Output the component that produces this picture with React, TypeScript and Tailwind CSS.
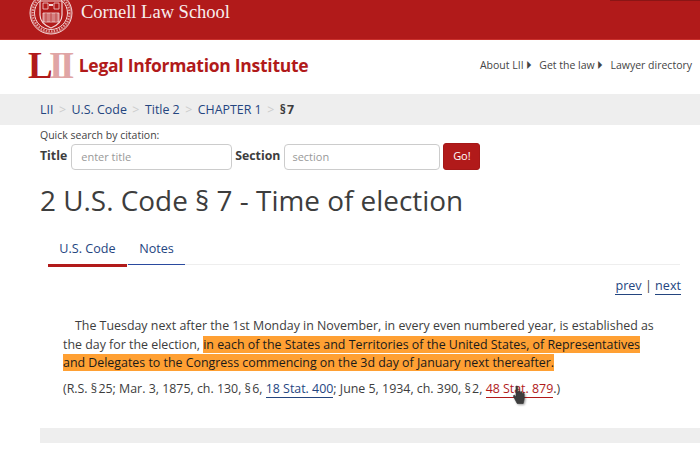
import React from 'react'

const linkBlue = 'text-[#24457f]'

const Seal = () => (
  <svg width="44" height="44" viewBox="0 0 44 44" fill="none" stroke="#f3d6d6">
    <circle cx="22" cy="22" r="21" strokeWidth="1" />
    <circle cx="22" cy="22" r="20" strokeWidth="0.5" />
    <circle cx="22" cy="22" r="16.5" strokeWidth="1" />
    <circle cx="22" cy="22" r="18.3" strokeWidth="2.2" strokeDasharray="1.5 1.2" opacity="0.7" />
    <path d="M11 10h22v14c0 7-6 11-11 13-5-2-11-6-11-13z" strokeWidth="1.2" />
    <path d="M14 12h5v6h-5zM25 12h5v6h-5z" strokeWidth="1" opacity="0.8" />
    <path d="M20 14h4" strokeWidth="2" />
    <path d="M14 22h16v9h-16z" fill="#f3d6d6" fillOpacity="0.55" strokeWidth="0.8" />
    <path d="M22 22v9M17 22v9M27 22v9" strokeWidth="0.6" stroke="#b11a1a" />
  </svg>
)

const HandCursor = () => (
  <svg width="16" height="20" viewBox="0 0 16 20" className="drop-shadow-[1px_1px_1px_rgba(0,0,0,0.4)]">
    <path
      d="M4 1.5c0-.8 1.6-.8 1.6 0V8l.6-.2V6.6c0-.8 1.6-.8 1.6 0V8l.6 0V7.2c0-.8 1.6-.8 1.6 0v1.2l.6.1c0-.8 1.6-.7 1.6.2V14l-1 4.5H5.2L1.5 11.5c-.5-1 .7-1.8 1.4-1L4 12z"
      fill="#3d3d3d"
      stroke="#333"
      strokeWidth="0.6"
    />
  </svg>
)

const Sep = () => <span className="mx-[5.5px] text-[#ccc]">&gt;</span>

export default function App() {
  return (
    <div className="relative h-[451px] w-[700px] overflow-hidden bg-white font-['Open_Sans',sans-serif] text-[#3d3d3d]">
      {/* Cornell bar */}
      <header className="flex h-[40px] items-center overflow-hidden border-b border-[#c9302c] bg-[#b11a1a] pl-[29px]">
        <div className="-mt-[14px] h-[44px] w-[44px] shrink-0">
          <Seal />
        </div>
        <span className="ml-[8px] -mt-[13px] font-['Liberation_Serif',serif] text-[18.5px] text-[#f8eeee]">Cornell Law School</span>
      </header>
      <div className="absolute right-0 top-0 h-px w-[90px] bg-[#8a1515]" />

      {/* LII bar */}
      <div className="flex h-[54px] items-center justify-between pl-[29px] pr-[8px]">
        <div className="-mt-[4px] flex items-center">
          <span className="-ml-px font-['Liberation_Serif',serif] text-[37px] font-bold leading-none tracking-[-3.6px] text-[#b11a1a]">
            L<span className="text-[#e0a5a5]">II</span>
          </span>
          <span className="ml-[8px] text-[17.5px] font-bold tracking-[-0.27px] text-[#b11a1a]">Legal Information Institute</span>
        </div>
        <nav className="-mt-[2px] flex items-center gap-[7px] text-[10.5px] text-[#444]">
          <span>About LII ⏵</span>
          <span>Get the law ⏵</span>
          <span>Lawyer directory</span>
        </nav>
      </div>

      {/* Breadcrumb */}
      <div className="flex h-[31px] items-center bg-[#eee] pl-[40px] pt-[2px] text-[12.4px]">
        <span className={linkBlue}>LII</span>
        <Sep />
        <span className={linkBlue}>U.S. Code</span>
        <Sep />
        <span className={linkBlue}>Title 2</span>
        <Sep />
        <span className={linkBlue}>CHAPTER 1</span>
        <Sep />
        <span className="font-bold">§&#8202;7</span>
      </div>

      {/* Quick search */}
      <div className="pl-[40px]">
        <div className="mt-[2px] text-[10.5px] leading-[16px] text-[#444]">Quick search by citation:</div>
        <div className="mt-[1px] flex items-start">
          <label className="mr-[4px] text-[12.3px] font-bold leading-[24px]">Title</label>
          <div className="flex h-[26px] w-[161px] items-center rounded-[4px] border border-[#ccc] pl-[9px] text-[11px] text-[#999]">enter title</div>
          <label className="ml-[3px] mr-[4px] text-[12.3px] font-bold leading-[24px]">Section</label>
          <div className="flex h-[26px] w-[156px] items-center rounded-[4px] border border-[#ccc] pl-[7px] text-[11px] text-[#999]">section</div>
          <button className="-mt-px ml-[3px] h-[27px] w-[37px] rounded-[3px] border border-[#a51818] bg-[#b11a1a] text-[11px] text-white">Go!</button>
        </div>
        <h1 className="mt-[10px] text-[27.9px] leading-[40px]">2 U.S. Code § 7 - Time of election</h1>
      </div>

      {/* Tabs */}
      <div className="ml-[48px] mr-[20px] mt-[14px] flex h-[31px] items-start border-b border-[#eee]">
        <div className={`flex h-[33px] w-[79px] shrink-0 items-center justify-center border-b-[3px] border-[#b11a1a] text-[12.6px] ${linkBlue}`}>U.S. Code</div>
        <div className={`ml-px flex h-[31px] w-[57px] shrink-0 items-center justify-center border-b border-[#2a4a9f] text-[12.6px] ${linkBlue}`}>Notes</div>
      </div>

      <div className={`mr-[19px] mt-[11px] text-right text-[12.6px] leading-[20px] ${linkBlue}`}>
        <span className="border-b border-[#24457f]">prev</span>
        <span className="text-[#3d3d3d]"> | </span>
        <span className="border-b border-[#24457f]">next</span>
      </div>

      {/* Statute text */}
      <div className="ml-[63px] mr-[38px] mt-[21px] text-[12.4px] leading-[18.6px]">
        <p className="indent-[12px]">
          The Tuesday next after the 1st Monday in November, in every even numbered year, is established as the day for the election,{' '}
          <span className="bg-[#ffa033] text-[#1a1a1a]">in each of the States and Territories of the United States, of Representatives and Delegates to the Congress commencing on the 3d day of January next thereafter.</span>
        </p>
        <p className="mt-[7px]">
          (R.S. §&#8202;25; Mar. 3, 1875, ch. 130, §&#8202;6, <span className={`border-b border-[#24457f] ${linkBlue}`}>18 Stat. 400</span>; June 5, 1934, ch. 390, §&#8202;2, <span className="border-b border-[#b11a1a] text-[#b11a1a]">48 Stat. 879</span>.)
        </p>
      </div>

      <div className="ml-[40px] mt-[30px] h-[15px] bg-[#eee]" />

      {/* mouse pointer over the second link */}
      <div className="absolute left-[512px] top-[385px]">
        <HandCursor />
      </div>
    </div>
  )
}
